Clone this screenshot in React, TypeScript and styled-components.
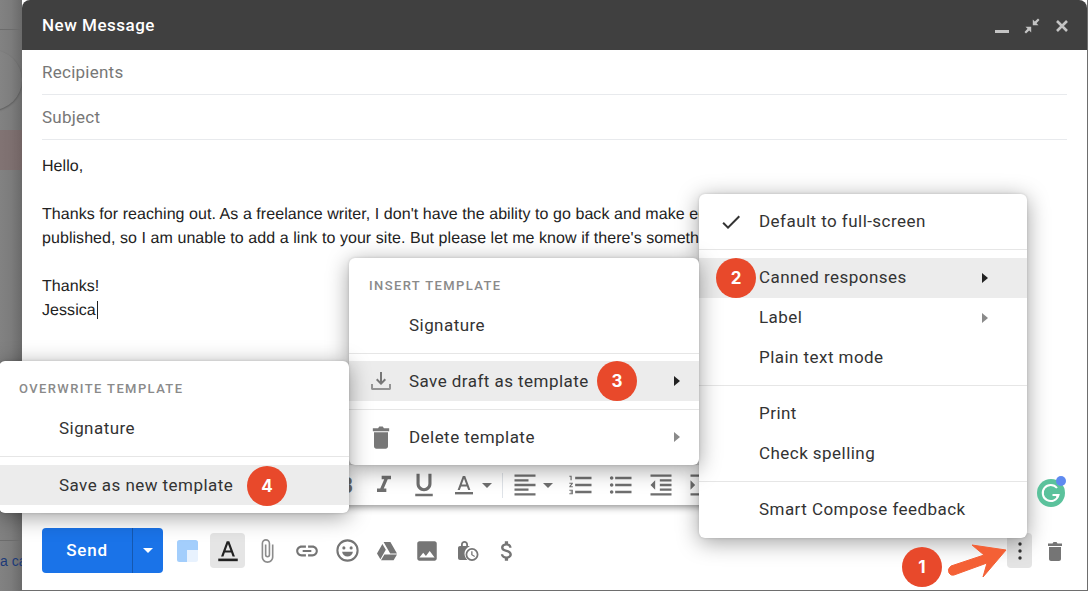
import React from 'react';
import styled, { createGlobalStyle } from 'styled-components';
import {
  MdAttachFile,
  MdCheck,
  MdFormatAlignLeft,
  MdFormatIndentDecrease,
  MdFormatIndentIncrease,
  MdFormatItalic,
  MdFormatListBulleted,
  MdFormatListNumbered,
  MdFormatUnderlined,
  MdInsertPhoto,
  MdLink,
  MdAttachMoney,
} from 'react-icons/md';

const GlobalStyle = createGlobalStyle`
  html, body {
    margin: 0;
    padding: 0;
    height: 100%;
    overflow: hidden;
    background: #6e6e6e;
  }
  #root {
    height: 100%;
  }
`;

const Page = styled.div`
  position: relative;
  display: flex;
  width: 1088px;
  height: 591px;
  overflow: hidden;
  font-family: Roboto, 'Liberation Sans', sans-serif;
`;

const Backdrop = styled.div`
  position: relative;
  width: 22px;
  flex: none;
  overflow: hidden;
  display: flex;
  flex-direction: column;
  background: linear-gradient(90deg, #828282 0%, #7c7c7c 50%, #6a6a6a 100%);
`;

const BackdropRow = styled.div<{ $h: number; $tint?: string; $line?: boolean }>`
  height: ${(p) => p.$h}px;
  flex: none;
  background: ${(p) => p.$tint || 'transparent'};
  border-bottom: ${(p) => (p.$line ? '1px solid #6c6c6c' : 'none')};
  box-sizing: border-box;
  white-space: nowrap;
`;

const BackdropCircle = styled.div`
  position: absolute;
  left: -38px;
  top: 50px;
  width: 60px;
  height: 60px;
  border-radius: 50%;
  background: rgba(255, 255, 255, 0.02);
  box-shadow: 0 1px 2px rgba(0, 0, 0, 0.3);
`;

const BackdropLink = styled.div`
  padding-top: 12px;
  font-family: 'Liberation Sans', sans-serif;
  font-size: 14px;
  color: #1c3a78;
`;

const Compose = styled.div`
  width: 1065px;
  height: 590px;
  flex: none;
  display: flex;
  flex-direction: column;
  background: #fff;
`;

const TitleBar = styled.div`
  height: 50px;
  flex: none;
  display: flex;
  align-items: center;
  justify-content: space-between;
  box-sizing: border-box;
  padding: 0 18px 0 20px;
  background: #404040;
  border-radius: 8px 8px 0 0;
  color: #fff;
  font-size: 17px;
  font-weight: 500;
  letter-spacing: 0.5px;
`;

const WindowControls = styled.div`
  display: flex;
  align-items: center;
  gap: 15px;
  margin-top: 1px;
  color: #c4c4c4;
`;

const Field = styled.div`
  height: 45px;
  flex: none;
  box-sizing: border-box;
  margin: 0 20px;
  display: flex;
  align-items: center;
  border-bottom: 1px solid #e8eaed;
  color: #777;
  font-size: 17px;
  letter-spacing: 0.25px;
`;

const Body = styled.div`
  flex: 1;
  padding: 15px 20px 0;
  font-family: 'Liberation Sans', Arial, sans-serif;
  font-size: 16px;
  letter-spacing: 0.06px;
  text-rendering: geometricPrecision;
  line-height: 24px;
  color: #222;
  white-space: nowrap;
  overflow: hidden;
`;

const Caret = styled.span`
  display: inline-block;
  width: 1px;
  height: 18px;
  margin-left: 1px;
  vertical-align: -4px;
  background: #222;
`;

const FormatBar = styled.div`
  width: 680px;
  height: 40px;
  flex: none;
  margin-left: 20px;
  display: flex;
  align-items: center;
  box-sizing: border-box;
  padding-left: 307px;
  background: #fff;
  color: #6f6f6f;
  box-shadow: 0 2px 7px rgba(0, 0, 0, 0.45);
`;

const FormatBold = styled.span`
  width: 4px;
  margin-right: 11px;
  overflow: hidden;
  font-size: 22px;
  font-weight: 700;
  direction: rtl;
`;

const FormatCell = styled.span<{ $gap?: number }>`
  width: 40px;
  margin-left: ${(p) => p.$gap || 0}px;
  flex: none;
  display: flex;
  align-items: center;
  justify-content: center;
`;

const FormatDivider = styled.span`
  width: 1px;
  height: 25px;
  margin: 0 8px 0 10px;
  background: #dfe3e8;
`;

const FormatDrop = styled.span<{ $inset?: number; $gap?: number }>`
  display: flex;
  align-items: center;
  gap: ${(p) => p.$gap ?? 4}px;
  margin-left: ${(p) => p.$inset || 0}px;
`;

const SmallArrowDown = styled.span`
  width: 0;
  height: 0;
  border-left: 5px solid transparent;
  border-right: 5px solid transparent;
  border-top: 5px solid #6f6f6f;
`;

const ActionBar = styled.div`
  flex: none;
  height: 45px;
  margin: 23px 20px 17px;
  display: flex;
  align-items: center;
  justify-content: space-between;
`;

const ActionGroup = styled.div`
  display: flex;
  align-items: center;
`;

const SendButton = styled.div`
  display: flex;
  height: 45px;
  margin-right: 14px;
  border-radius: 4px;
  background: #1a73e8;
  color: #fff;
  font-size: 17px;
  font-weight: 500;
  letter-spacing: 0.8px;
`;

const SendLabel = styled.div`
  width: 91px;
  box-sizing: border-box;
  padding-bottom: 2px;
  display: flex;
  align-items: center;
  justify-content: center;
  border-right: 1px solid #1558b0;
`;

const SendDrop = styled.div`
  width: 30px;
  display: flex;
  align-items: center;
  justify-content: center;
`;

const SendArrow = styled.span`
  width: 0;
  height: 0;
  border-left: 5px solid transparent;
  border-right: 5px solid transparent;
  border-top: 5px solid #fff;
`;

const LayoutsCell = styled.div`
  width: 33px;
  display: flex;
  align-items: center;
`;

const ActionIcon = styled.div<{ $active?: boolean; $w?: number; $gap?: number; $soft?: boolean }>`
  width: ${(p) => p.$w || 40}px;
  height: 35px;
  margin-left: ${(p) => p.$gap || 0}px;
  display: flex;
  align-items: center;
  justify-content: center;
  border-radius: 4px;
  color: ${(p) => (p.$active ? '#222' : p.$soft ? '#8c8c8c' : '#757575')};
  background: ${(p) => (p.$active ? '#e5e5e5' : 'transparent')};
`;

const MoreButton = styled.div`
  width: 25px;
  height: 35px;
  margin-right: 11px;
  display: flex;
  align-items: center;
  justify-content: center;
  border-radius: 4px;
  background: #e4e4e4;
`;

const Menu = styled.div<{ $left: number; $top: number; $width: number }>`
  position: absolute;
  left: ${(p) => p.$left}px;
  top: ${(p) => p.$top}px;
  width: ${(p) => p.$width}px;
  padding: 8px 0;
  box-sizing: border-box;
  background: #fff;
  border-radius: 6px;
  box-shadow: 0 4px 22px rgba(0, 0, 0, 0.38), 0 0 3px rgba(0, 0, 0, 0.15);
  color: #333;
  font-size: 17px;
  letter-spacing: 0.45px;
`;

const MenuHeading = styled.div`
  height: 40px;
  box-sizing: border-box;
  padding: 12px 20px 0;
  font-size: 13px;
  font-weight: 500;
  letter-spacing: 1.4px;
  color: #8a8a8a;
`;

const MenuItem = styled.div<{ $active?: boolean; $flush?: boolean }>`
  height: 40px;
  box-sizing: border-box;
  display: flex;
  align-items: center;
  padding: 0 0 ${(p) => (p.$flush ? 0 : 2)}px 60px;
  position: relative;
  white-space: nowrap;
  background: ${(p) => (p.$active ? '#ececec' : 'transparent')};
`;

const MenuRule = styled.div<{ $before?: number; $after?: number }>`
  height: 1px;
  margin: ${(p) => p.$before ?? 7}px 0 ${(p) => p.$after ?? 8}px;
  background: #e6e6e6;
`;

const MenuIcon = styled.span<{ $left?: number }>`
  position: absolute;
  left: ${(p) => p.$left ?? 20}px;
  top: 50%;
  transform: translateY(-50%);
  display: flex;
  color: #777;
`;

const SubArrow = styled.span<{ $dark?: boolean; $right?: number }>`
  position: absolute;
  right: ${(p) => p.$right ?? 39}px;
  top: 15px;
  width: 0;
  height: 0;
  border-top: 5px solid transparent;
  border-bottom: 5px solid transparent;
  border-left: 6px solid ${(p) => (p.$dark ? '#222' : '#8a8a8a')};
`;

const Step = styled.div<{ $left: number; $top: number }>`
  position: absolute;
  left: ${(p) => p.$left}px;
  top: ${(p) => p.$top}px;
  width: 40px;
  height: 40px;
  display: flex;
  align-items: center;
  justify-content: center;
  border-radius: 50%;
  background: #e8492b;
  color: #fff;
  font-family: Inter, Roboto, sans-serif;
  font-size: 17px;
  font-weight: 700;
`;

const Overlay = styled.svg<{ $left: number; $top: number }>`
  position: absolute;
  left: ${(p) => p.$left}px;
  top: ${(p) => p.$top}px;
`;

const TemplateIcon = () => (
  <svg width="24" height="24" viewBox="0 0 24 24" fill="currentColor">
    <path d="M11 3h2v9.200l2.600-2.600L17 11l-5 5-5-5 1.400-1.400 2.600 2.600z" />
    <path d="M2 15h2v4h16v-4h2v4.500c0 .9-.7 1.500-1.500 1.500h-17C2.700 21 2 20.400 2 19.500z" opacity="0.75" />
  </svg>
);

const TrashIcon = ({ size = 24 }: { size?: number }) => (
  <svg width={size} height={size} viewBox="0 0 24 24" fill="currentColor">
    <path d="M5 4.500h4.500L10.500 3h3l1 1.500H19V7H5zM6 8h12v12c0 1.100-.9 2-2 2H8c-1.100 0-2-.9-2-2z" />
  </svg>
);

const DriveIcon = () => (
  <svg width="24" height="24" viewBox="0 0 24 24" fill="#757575">
    <path d="M8.600 3h6.800l6.600 11.400h-6.800zM7.400 4.900 10.800 10.800 5.400 20.200 2 14.400zM9.400 15.400H22l-3.400 5.800H6z" />
  </svg>
);

const ScheduleLockIcon = () => (
  <svg width="24" height="24" viewBox="0 0 24 24" fill="#757575">
    <path d="M12.400 21H5c-1.100 0-2-.9-2-2V9c0-1.100.9-2 2-2h1V5.500C6 3.500 7.600 2 9.500 2S13 3.500 13 5.500V7h.5c.5 0 1 .2 1.300.5C11.500 8.500 9.500 11.400 9.500 14.600c0 2.500 1.100 4.900 2.900 6.400zM7.800 7h3.400V5.500c0-1-.7-1.800-1.700-1.800s-1.700.8-1.700 1.800z" />
    <path fillRule="evenodd" d="M17 9a6.500 6.500 0 1 1 0 13 6.500 6.500 0 0 1 0-13zm0 1.800a4.700 4.700 0 1 0 0 9.400 4.700 4.700 0 0 0 0-9.400zM16.200 12.300h1.300v3.200l2.500 1.500-.6 1-3.200-1.900z" />
  </svg>
);

const LayoutsIcon = () => (
  <svg width="21" height="22" viewBox="0 0 21 22">
    <path d="M0 2.500A2.500 2.500 0 0 1 2.500 0h16A2.500 2.500 0 0 1 21 2.500V10H10v12H2.500A2.500 2.500 0 0 1 0 19.500z" fill="#a3cefc" />
    <path d="M10 10h11v9.500a2.500 2.500 0 0 1-2.500 2.500H10z" fill="#e8f2fe" />
  </svg>
);

const TextColorIcon = ({ size = 24 }: { size?: number }) => (
  <svg width={size} height={size} viewBox="0 0 24 24" fill="currentColor">
    <path d="M10.800 3h2.400l5.200 14h-2.200l-1.300-3.600H9.100L7.800 17H5.600zM9.800 11.600h4.400L12 5.500z" />
    <rect x="3" y="19" width="18" height="2.400" />
  </svg>
);

const SmileIcon = () => (
  <svg width="25" height="25" viewBox="0 0 24 24" fill="#757575">
    <circle cx="12" cy="12" r="9.700" fill="none" stroke="#757575" strokeWidth="2" />
    <circle cx="8.500" cy="9.500" r="1.500" />
    <circle cx="15.500" cy="9.500" r="1.500" />
    <path d="M6.800 13.200h10.400c-.4 2.700-2.600 4.600-5.200 4.600s-4.800-1.900-5.200-4.600z" />
  </svg>
);

const MoreDots = () => (
  <svg width="6" height="20" viewBox="0 0 6 20" fill="#333">
    <circle cx="3" cy="3" r="1.700" />
    <circle cx="3" cy="10" r="1.700" />
    <circle cx="3" cy="17" r="1.700" />
  </svg>
);

const GrammarlyBadge = () => (
  <Overlay $left={1036} $top={476} width="32" height="32" viewBox="0 0 32 32">
    <circle cx="15" cy="17" r="14" fill="#5bc29c" />
    <path d="M21 12a8 8 0 1 0 1.500 7h-6" fill="none" stroke="#fff" strokeWidth="2" />
    <path d="M22.500 19l-1 3-2-2.500z" fill="#fff" />
    <circle cx="25" cy="5" r="5" fill="#5f8af0" />
  </Overlay>
);

const PointerArrow = () => (
  <Overlay $left={945} $top={542} width="64" height="38" viewBox="0 0 64 38">
    <path
      d="M61 8 L27 3 L39 13 L6 24 Q2 27 4 31 Q6 34 9 33 L42 21 L38 35 Z"
      fill="#f46035"
      stroke="#f46035"
      strokeWidth="1"
      strokeLinejoin="round"
    />
  </Overlay>
);

export default function App() {
  return (
    <Page>
      <GlobalStyle />
      <Backdrop>
        <BackdropRow $h={30} $line />
        <BackdropRow $h={100} />
        <BackdropRow $h={40} $tint="rgba(130, 90, 90, 0.35)" />
        <BackdropRow $h={371} $line />
        <BackdropRow $h={50}>
          <BackdropLink>a ca</BackdropLink>
        </BackdropRow>
        <BackdropCircle />
      </Backdrop>
      <Compose>
        <TitleBar>
          New Message
          <WindowControls>
            <svg width="14" height="14" viewBox="0 0 14 14" fill="currentColor">
              <rect x="0" y="11" width="14" height="3" />
            </svg>
            <svg width="16" height="16" viewBox="0 0 16 16" fill="currentColor">
              <path d="M8.800 7.200V1.500l2 2L14 .5 15.500 2l-3 3.200 2 2zM7.200 8.800v5.700l-2-2L2 15.500.5 14l3-3.200-2-2z" />
            </svg>
            <svg width="14" height="14" viewBox="0 0 14 14" stroke="currentColor" strokeWidth="2.600">
              <path d="M2 2l10 10M12 2L2 12" />
            </svg>
          </WindowControls>
        </TitleBar>
        <Field>Recipients</Field>
        <Field>Subject</Field>
        <Body>
          Hello,
          <br />
          <br />
          Thanks for reaching out. As a freelance writer, I don't have the ability to go back and make edits to articles once they're
          <br />
          published, so I am unable to add a link to your site. But please let me know if there's something else I can help with.
          <br />
          <br />
          Thanks!
          <br />
          Jessica
          <Caret />
        </Body>
        <FormatBar>
          <FormatBold>B</FormatBold>
          <FormatCell>
            <MdFormatItalic size={28} />
          </FormatCell>
          <FormatCell>
            <MdFormatUnderlined size={30} />
          </FormatCell>
          <FormatDrop $inset={8} $gap={6}>
            <TextColorIcon />
            <SmallArrowDown />
          </FormatDrop>
          <FormatDivider />
          <FormatDrop>
            <MdFormatAlignLeft size={28} />
            <SmallArrowDown />
          </FormatDrop>
          <FormatCell $gap={8}>
            <MdFormatListNumbered size={28} />
          </FormatCell>
          <FormatCell>
            <MdFormatListBulleted size={28} />
          </FormatCell>
          <FormatCell>
            <MdFormatIndentDecrease size={28} />
          </FormatCell>
          <FormatCell>
            <MdFormatIndentIncrease size={28} />
          </FormatCell>
        </FormatBar>
        <ActionBar>
          <ActionGroup>
            <SendButton>
              <SendLabel>Send</SendLabel>
              <SendDrop>
                <SendArrow />
              </SendDrop>
            </SendButton>
            <LayoutsCell>
              <LayoutsIcon />
            </LayoutsCell>
            <ActionIcon $active $w={35}>
              <TextColorIcon size={26} />
            </ActionIcon>
            <ActionIcon $gap={2} $soft>
              <MdAttachFile size={26} />
            </ActionIcon>
            <ActionIcon>
              <MdLink size={26} />
            </ActionIcon>
            <ActionIcon>
              <SmileIcon />
            </ActionIcon>
            <ActionIcon>
              <DriveIcon />
            </ActionIcon>
            <ActionIcon>
              <MdInsertPhoto size={26} />
            </ActionIcon>
            <ActionIcon>
              <ScheduleLockIcon />
            </ActionIcon>
            <ActionIcon>
              <MdAttachMoney size={26} />
            </ActionIcon>
          </ActionGroup>
          <ActionGroup>
            <MoreButton>
              <MoreDots />
            </MoreButton>
            <ActionIcon $w={24}>
              <TrashIcon size={28} />
            </ActionIcon>
          </ActionGroup>
        </ActionBar>
      </Compose>

      <Menu $left={699} $top={194} $width={328}>
        <MenuItem>
          <MenuIcon>
            <MdCheck size={24} color="#333" />
          </MenuIcon>
          Default to full-screen
        </MenuItem>
        <MenuRule />
        <MenuItem $active>
          Canned responses
          <SubArrow $dark />
        </MenuItem>
        <MenuItem>
          Label
          <SubArrow />
        </MenuItem>
        <MenuItem>Plain text mode</MenuItem>
        <MenuRule />
        <MenuItem>Print</MenuItem>
        <MenuItem>Check spelling</MenuItem>
        <MenuRule />
        <MenuItem>Smart Compose feedback</MenuItem>
      </Menu>

      <Menu $left={349} $top={258} $width={350}>
        <MenuHeading>INSERT TEMPLATE</MenuHeading>
        <MenuItem>Signature</MenuItem>
        <MenuRule $after={7} />
        <MenuItem $active $flush>
          <MenuIcon>
            <TemplateIcon />
          </MenuIcon>
          Save draft as template
          <SubArrow $dark $right={19} />
        </MenuItem>
        <MenuRule $before={8} $after={7} />
        <MenuItem $flush>
          <MenuIcon $left={18}>
            <TrashIcon size={28} />
          </MenuIcon>
          Delete template
          <SubArrow $right={19} />
        </MenuItem>
      </Menu>

      <Menu $left={-1} $top={361} $width={350}>
        <MenuHeading>OVERWRITE TEMPLATE</MenuHeading>
        <MenuItem>Signature</MenuItem>
        <MenuRule />
        <MenuItem $active $flush>Save as new template</MenuItem>
      </Menu>

      <GrammarlyBadge />
      <PointerArrow />
      <Step $left={902} $top={547}>1</Step>
      <Step $left={716} $top={258}>2</Step>
      <Step $left={597} $top={361}>3</Step>
      <Step $left={247} $top={466}>4</Step>
    </Page>
  );
}
